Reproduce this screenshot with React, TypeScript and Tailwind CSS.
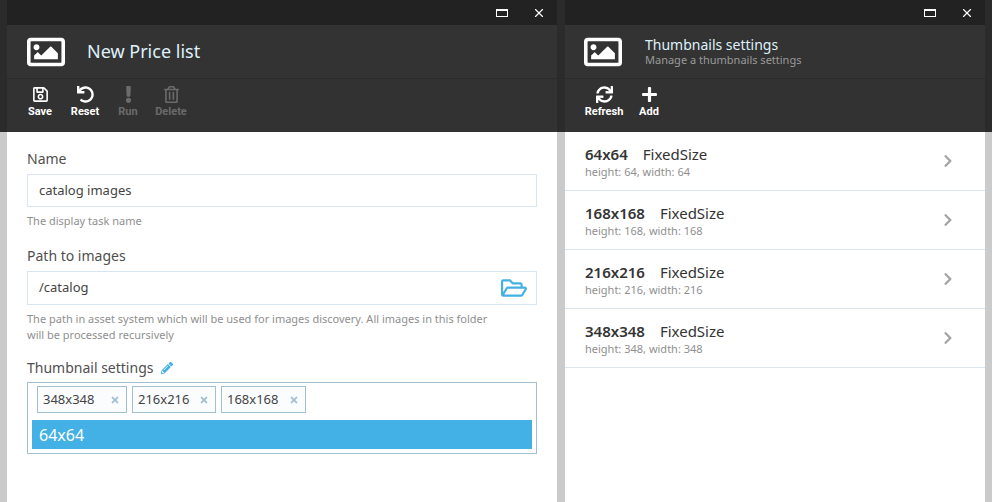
import React from 'react';
import {
  FaChevronRight,
  FaExclamation,
  FaPencilAlt,
  FaPlus,
  FaRegFolderOpen,
  FaRegImage,
  FaRegSave,
  FaRegTrashAlt,
  FaSync,
  FaTimes,
  FaUndo,
} from 'react-icons/fa';
import { X } from 'lucide-react';

const Gutter = ({ width }: { width: string }) => (
  <div className={`flex flex-col shrink-0 ${width}`}>
    <div className="h-[132px] bg-[#2b2b2b]" />
    <div className="flex-1 bg-[#cbcbcb]" />
  </div>
);

const TitleBar = () => (
  <div className="h-[25px] bg-[#222222] flex items-center justify-end">
    <div className="w-[12px] h-[8px] border border-white border-t-2 mr-[24px]" />
    <X size={14} strokeWidth={2} className="text-white mr-[11px]" />
  </div>
);

const ToolButton = ({
  icon,
  label,
  disabled,
  width,
}: {
  icon: React.ReactNode;
  label: string;
  disabled?: boolean;
  width: string;
}) => (
  <div className={`flex flex-col items-center ${width} ${disabled ? 'text-[#6b6b6b]' : 'text-white'}`}>
    <div className="h-[20px] flex items-center justify-center text-[17px]">{icon}</div>
    <div className="text-[11px] leading-[14px] mt-[1px] font-bold font-['Roboto',sans-serif]">{label}</div>
  </div>
);

const Field = ({ label, children }: { label: React.ReactNode; children: React.ReactNode }) => (
  <div>
    <div className="text-[14px] leading-[18px] text-[#4f4f4f] mb-[6px]">{label}</div>
    {children}
  </div>
);

const Tag = ({ text, width }: { text: string; width: string }) => (
  <div className={`h-[27px] border border-[#a3bfd2] bg-[#fafcfe] flex items-center justify-between pl-[5px] pr-[6px] text-[13px] text-[#444444] ${width}`}>
    <span>{text}</span>
    <FaTimes size={10} className="text-[#a3bfd2]" />
  </div>
);

const thumbs = [
  { name: '64x64', h: 64, w: 64 },
  { name: '168x168', h: 168, w: 168 },
  { name: '216x216', h: 216, w: 216 },
  { name: '348x348', h: 348, w: 348 },
];

export default function App() {
  return (
    <div className="w-[992px] h-[502px] overflow-hidden flex bg-white font-['Noto_Sans',sans-serif]">
      <Gutter width="w-[7px]" />

      <div className="w-[550px] shrink-0 flex flex-col">
        <TitleBar />
        <div className="h-[54px] bg-[#333333] flex items-center pl-[20px] border-b border-[#2a2a2a]">
          <FaRegImage size={38} className="text-white" />
          <div className="ml-[22px] text-[18px] text-[#dff1fb]">New Price list</div>
        </div>
        <div className="h-[53px] bg-[#323232] flex items-start pt-[5px] pl-[15px] gap-[9px]">
          <ToolButton width="w-[36px]" icon={<FaRegSave />} label="Save" />
          <ToolButton width="w-[36px]" icon={<FaUndo />} label="Reset" />
          <ToolButton width="w-[32px]" disabled icon={<FaExclamation />} label="Run" />
          <ToolButton width="w-[36px]" disabled icon={<FaRegTrashAlt />} label="Delete" />
        </div>

        <div className="flex-1 bg-white pl-[20px] pr-[20px] pt-[18px]">
          <Field label="Name">
            <div className="h-[33px] border border-[#d9e6ef] flex items-center pl-[11px] text-[13px] text-[#444444]">catalog images</div>
            <div className="text-[11px] leading-[16px] text-[#8f8f8f] mt-[6px]">The display task name</div>
          </Field>
          <div className="mt-[18px]">
            <Field label="Path to images">
              <div className="h-[34px] border border-[#d9e6ef] flex items-center justify-between pl-[11px] pr-[9px] text-[13px] text-[#444444]">
                <span>/catalog</span>
                <FaRegFolderOpen size={26} className="text-[#43b0e6]" />
              </div>
              <div className="text-[11px] leading-[16px] text-[#8f8f8f] mt-[6px]">
                The path in asset system which will be used for images discovery. All images in this folder
                <br />
                will be processed recursively
              </div>
            </Field>
          </div>
          <div className="mt-[16px]">
            <div className="text-[14px] leading-[18px] text-[#4f4f4f] flex items-center gap-[8px] mb-[5px]">
              Thumbnail settings
              <FaPencilAlt size={12} className="text-[#43b0e6]" />
            </div>
            <div className="h-[72px] border border-[#a3bfd2] px-[4px] pt-[3px]">
              <div className="flex gap-[5px] pl-[5px]">
                <Tag text="348x348" width="w-[90px]" />
                <Tag text="216x216" width="w-[84px]" />
                <Tag text="168x168" width="w-[85px]" />
              </div>
              <div className="h-[29px] mt-[7px] bg-[#43b0e6] text-white text-[16px] flex items-center pl-[7px]">64x64</div>
            </div>
          </div>
        </div>
      </div>

      <Gutter width="w-[8px]" />

      <div className="w-[420px] shrink-0 flex flex-col">
        <TitleBar />
        <div className="h-[54px] bg-[#333333] flex items-center pl-[19px] border-b border-[#2a2a2a]">
          <FaRegImage size={38} className="text-white" />
          <div className="ml-[23px]">
            <div className="text-[14px] leading-[17px] text-[#dff1fb]">Thumbnails settings</div>
            <div className="text-[11px] leading-[14px] text-[#9a9a9a]">Manage a thumbnails settings</div>
          </div>
        </div>
        <div className="h-[53px] bg-[#323232] flex items-start pt-[5px] pl-[19px] gap-[11px]">
          <ToolButton width="w-[40px]" icon={<FaSync />} label="Refresh" />
          <ToolButton width="w-[28px]" icon={<FaPlus />} label="Add" />
        </div>
        <div className="flex-1 bg-white">
          {thumbs.map((t) => (
            <div key={t.name} className="h-[59px] border-b border-[#dbe6ee] flex items-center justify-between pl-[20px] pr-[30px]">
              <div>
                <div className="text-[15px] leading-[20px] text-[#333333]">
                  <span className="font-semibold">{t.name}</span>
                  <span className="ml-[15px]">FixedSize</span>
                </div>
                <div className="text-[11px] leading-[15px] text-[#8f8f8f]">
                  height: {t.h}, width: {t.w}
                </div>
              </div>
              <FaChevronRight size={14} className="text-[#a3a3a3]" />
            </div>
          ))}
        </div>
      </div>

      <Gutter width="w-[7px]" />
    </div>
  );
}
